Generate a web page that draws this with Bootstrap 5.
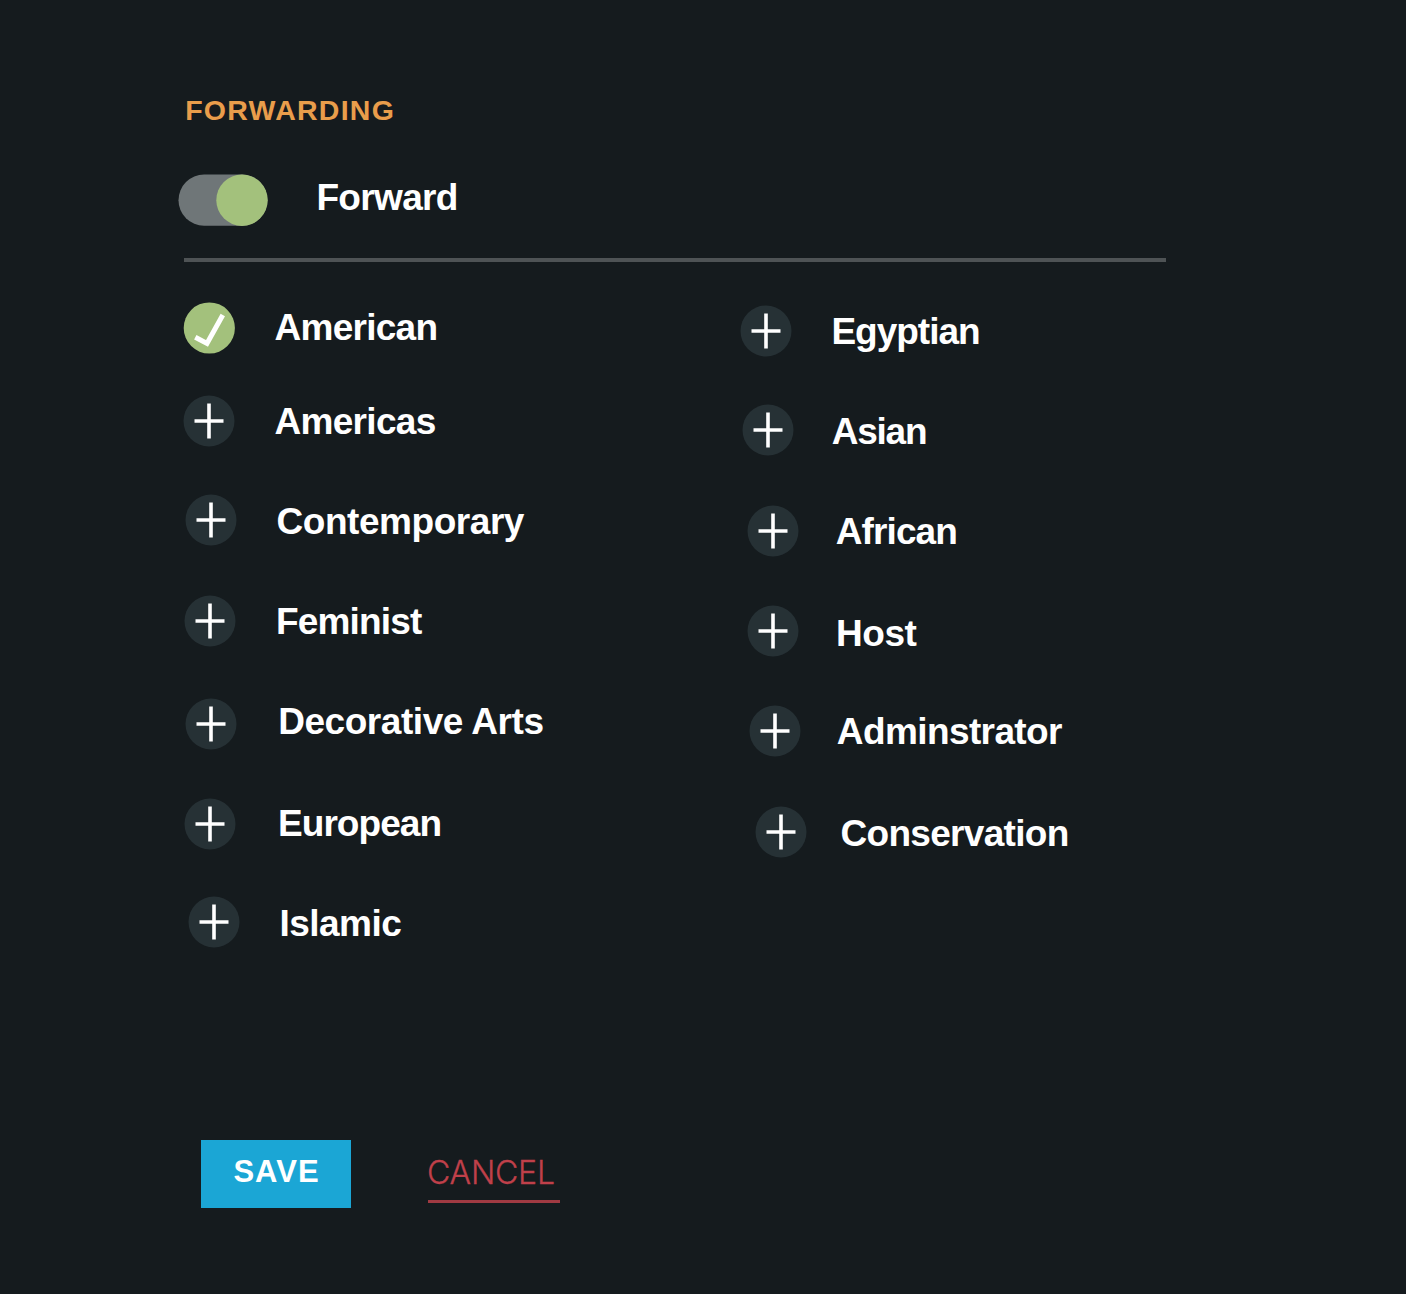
<!DOCTYPE html>
<html lang="en">
<head>
<meta charset="utf-8">
<meta name="viewport" content="width=device-width, initial-scale=1">
<title>Forwarding</title>
<link href="https://cdn.jsdelivr.net/npm/bootstrap@5.3.0/dist/css/bootstrap.min.css" rel="stylesheet">
<style>
body{background:#151b1e;color:#fff;font-family:"Liberation Sans",Arial,sans-serif;min-height:1294px}
.panel{width:982px;margin-left:184px;padding-top:90px}
.heading{font-size:28.5px;line-height:40px;letter-spacing:1.25px;color:#e99d4b;padding-left:1.2px}
.label-text{font-size:37px;line-height:40px;letter-spacing:var(--ls,-.45px);font-weight:700;white-space:nowrap}
.toggle-row{--ls:-.65px;margin:44px 0 0 -6px;height:84px}
.toggle-row .label-text{margin:4px 0 0 46.4px}
.rule{height:4px;background:#4e5355}
.list-left{width:556px;padding-top:40px}
.list-right{padding-top:42.6px}
.dept{height:var(--h,100px);padding-left:var(--x,0)}
.dept svg{width:52px;height:52px}
.dept .label-text{margin:var(--ty,13px) 0 0 var(--tx,39px)}
.list-left .dept:nth-child(1){--h:92.7px;--ty:6px;--tx:39.3px;--ls:-.75px;margin-left:-.7px}
.list-left .dept:nth-child(2){--h:99.3px;--ty:7px;--tx:39.2px;--ls:-.7px;margin-left:-.7px}
.list-left .dept:nth-child(3){--h:100.7px;--x:1.2px;--ty:8px;--tx:39.3px}
.list-left .dept:nth-child(4){--h:103px;--x:.4px;--ty:7px;--tx:39.5px;--ls:-.8px}
.list-left .dept:nth-child(5){--h:100.8px;--x:1.2px;--ty:4.5px;--tx:41px}
.list-left .dept:nth-child(6){--h:97.1px;--ty:5.5px;--tx:42px;--ls:-.95px}
.list-left .dept:nth-child(7){--h:52px;--x:4.3px;--ty:8.5px;--tx:39.3px;--ls:-.55px}
.list-right .dept:nth-child(1){--h:99.4px;--x:0;--ty:7.5px;--tx:39.4px;--ls:-1px}
.list-right .dept:nth-child(2){--h:101px;--x:1.8px;--ty:8px;--tx:38px;--ls:-1.25px}
.list-right .dept:nth-child(3){--h:100.5px;--x:7.3px;--ty:7px;--tx:36.5px;--ls:-.9px}
.list-right .dept:nth-child(4){--h:99.5px;--x:7.3px;--ty:8.5px;--tx:36.7px}
.list-right .dept:nth-child(5){--h:101px;--x:9.3px;--ty:7px;--tx:35.5px;--ls:-.6px}
.list-right .dept:nth-child(6){--h:52px;--x:15px;--ty:8px;--tx:33.5px;--ls:-.7px}
.actions{margin:192px 0 0 17px}
.btn-save{width:150px;height:68px;background:#1ba6d5;color:#fff;border:0;border-radius:0;font-size:31px;line-height:40px;font-weight:700;letter-spacing:1px;padding:0 0 3px 1px}
.btn-cancel{width:132px;height:63px;margin-left:77px;color:#c0404a;font-family:Inter,"Liberation Sans",sans-serif;font-weight:300;font-size:32px;line-height:40px;letter-spacing:-.2px;-webkit-text-stroke:.3px #c0404a;border-bottom:3px solid #a03a42;padding-top:13px;text-indent:-1px}
</style>
</head>
<body>
<svg class="d-none" xmlns="http://www.w3.org/2000/svg">
  <symbol id="plus" viewBox="0 0 52 52"><circle cx="26" cy="26" r="25.5" fill="#263135"/><path d="M11.5 26h29M26 8.5v35" stroke="#fff" stroke-width="3.6" fill="none"/></symbol>
  <symbol id="tick" viewBox="0 0 52 52"><circle cx="26.3" cy="26" r="25.6" fill="#a3c17c"/><path d="M12.3 35.2 24 41.5 39.8 13" stroke="#fff" stroke-width="5" fill="none"/></symbol>
</svg>
<main class="panel">
  <h1 class="heading fw-bold m-0">FORWARDING</h1>
  <div class="toggle-row d-flex align-items-start">
    <svg width="92" height="52" viewBox="0 0 92 52" role="switch" aria-label="Forward"><rect x=".5" y=".6" width="89" height="51.2" rx="25.6" fill="#6f7678"/><circle cx="64" cy="26.2" r="25.7" fill="#a3c17c"/></svg>
    <span class="label-text">Forward</span>
  </div>
  <div class="rule"></div>
  <div class="d-flex align-items-start">
    <ul class="list-unstyled list-left m-0 flex-shrink-0">
      <li class="dept d-flex align-items-start"><svg><use href="#tick"/></svg><span class="label-text">American</span></li>
      <li class="dept d-flex align-items-start"><svg><use href="#plus"/></svg><span class="label-text">Americas</span></li>
      <li class="dept d-flex align-items-start"><svg><use href="#plus"/></svg><span class="label-text">Contemporary</span></li>
      <li class="dept d-flex align-items-start"><svg><use href="#plus"/></svg><span class="label-text">Feminist</span></li>
      <li class="dept d-flex align-items-start"><svg><use href="#plus"/></svg><span class="label-text">Decorative Arts</span></li>
      <li class="dept d-flex align-items-start"><svg><use href="#plus"/></svg><span class="label-text">European</span></li>
      <li class="dept d-flex align-items-start"><svg><use href="#plus"/></svg><span class="label-text">Islamic</span></li>
    </ul>
    <ul class="list-unstyled list-right m-0">
      <li class="dept d-flex align-items-start"><svg><use href="#plus"/></svg><span class="label-text">Egyptian</span></li>
      <li class="dept d-flex align-items-start"><svg><use href="#plus"/></svg><span class="label-text">Asian</span></li>
      <li class="dept d-flex align-items-start"><svg><use href="#plus"/></svg><span class="label-text">African</span></li>
      <li class="dept d-flex align-items-start"><svg><use href="#plus"/></svg><span class="label-text">Host</span></li>
      <li class="dept d-flex align-items-start"><svg><use href="#plus"/></svg><span class="label-text">Adminstrator</span></li>
      <li class="dept d-flex align-items-start"><svg><use href="#plus"/></svg><span class="label-text">Conservation</span></li>
    </ul>
  </div>
  <div class="actions d-flex align-items-start">
    <button type="button" class="btn btn-save">SAVE</button>
    <a href="#" class="btn-cancel d-block text-decoration-none">CANCEL</a>
  </div>
</main>
<script src="https://cdn.jsdelivr.net/npm/bootstrap@5.3.0/dist/js/bootstrap.bundle.min.js"></script>
</body>
</html>
